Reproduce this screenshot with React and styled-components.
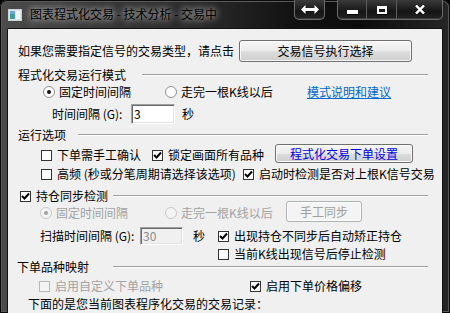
import styled, { createGlobalStyle } from 'styled-components';

const GlobalStyle = createGlobalStyle`
  html, body {
    margin: 0;
    padding: 0;
    background: #000;
  }
  body {
    font-family: "Noto Sans CJK SC", "Noto Sans", sans-serif;
    font-size: 12px;
  }
`;

const CheckMark = () => (
  <svg width="9" height="9" viewBox="0 0 9 9">
    <path d="M1 4 L3.5 6.5 L8 1.5" stroke="#000" strokeWidth="2" fill="none" />
  </svg>
);

const RadioDot = ({ checked, disabled }) => (
  <svg width="12" height="12" viewBox="0 0 12 12">
    <circle cx="6" cy="6" r="5.5" fill={disabled ? '#f4f4f4' : '#fff'} stroke={disabled ? '#c8c8c8' : '#8e8f8f'} />
    {checked && <circle cx="6" cy="6" r="2" fill={disabled ? '#a0a0a0' : '#111'} />}
  </svg>
);

const Check = ({ checked, disabled, children }) => (
  <Item>
    <Box $disabled={disabled}>{checked && <CheckMark />}</Box>
    <Label $disabled={disabled}>{children}</Label>
  </Item>
);

const Radio = ({ checked, disabled, children }) => (
  <Item $gap={4}>
    <RadioDot checked={checked} disabled={disabled} />
    <Label $disabled={disabled}>{children}</Label>
  </Item>
);

const App = () => (
  <>
    <GlobalStyle />
    <Window>
      <TitleBar>
        <AppIcon>
          <svg width="14" height="12" viewBox="0 0 14 12">
            <rect x="0.5" y="0.5" width="13" height="11" fill="#dfe6e8" stroke="#c9d2d6" />
            <rect x="2" y="2" width="5" height="8" fill="#3f9c9a" />
            <rect x="2" y="2" width="5" height="3" fill="#6aa7d8" />
            <rect x="8" y="2" width="4" height="8" fill="#f4f7f8" />
          </svg>
        </AppIcon>
        <Title>图表程式化交易 - 技术分析 - 交易中</Title>
        <Spacer />
        <CaptionGroup $mr={12}>
          <CaptionBtn $w={29}>
            <svg width="18" height="9" viewBox="0 0 18 9">
              <path d="M0 4.5 L4.5 0 L4.5 3 L13.5 3 L13.5 0 L18 4.5 L13.5 9 L13.5 6 L4.5 6 L4.5 9 Z" fill="#fff" />
            </svg>
          </CaptionBtn>
        </CaptionGroup>
        <CaptionGroup $mr={7}>
          <CaptionBtn $w={28}>
            <MinBar />
          </CaptionBtn>
          <CaptionBtn $w={29} $sep>
            <MaxBox />
          </CaptionBtn>
          <CaptionBtn $w={45} $sep>
            <svg width="10" height="9" viewBox="0 0 10 9">
              <path d="M1 0.5 L9 8.5 M9 0.5 L1 8.5" stroke="#fff" strokeWidth="2.4" />
            </svg>
          </CaptionBtn>
        </CaptionGroup>
      </TitleBar>

      <Panel>
        <Row $h={22} $mt={0} $pl={10}>
          <Slot $w={221}>
            <Label>如果您需要指定信号的交易类型，请点击</Label>
          </Slot>
          <Button $w={173} $h={22}>交易信号执行选择</Button>
        </Row>

        <Row $h={14} $mt={6} $pl={10}>
          <GroupLabel $w={124}>程式化交易运行模式</GroupLabel>
          <Etched />
        </Row>

        <Row $h={14} $mt={3} $pl={35}>
          <Slot $w={122}>
            <Radio checked>固定时间间隔</Radio>
          </Slot>
          <Slot $w={142}>
            <Radio>走完一根K线以后</Radio>
          </Slot>
          <Link>模式说明和建议</Link>
        </Row>

        <Row $h={20} $mt={5} $pl={44}>
          <Slot $w={79}>
            <Label>时间间隔 (G):</Label>
          </Slot>
          <Input $w={44} $h={20}>3</Input>
          <Label $ml={7}>秒</Label>
        </Row>

        <Row $h={14} $mt={4} $pl={10}>
          <GroupLabel $w={60}>运行选项</GroupLabel>
          <Etched />
        </Row>

        <Row $h={19} $mt={2} $pl={33} $align="flex-end">
          <Slot $w={111} $h={16}>
            <Check>下单需手工确认</Check>
          </Slot>
          <Slot $w={123} $h={16}>
            <Check checked>锁定画面所有品种</Check>
          </Slot>
          <Button $w={138} $h={19} $blue>程式化交易下单设置</Button>
        </Row>

        <Row $h={14} $mt={4} $pl={33}>
          <Slot $w={202}>
            <Check>高频 (秒或分笔周期请选择该选项)</Check>
          </Slot>
          <Check checked>启动时检测是否对上根K信号交易</Check>
        </Row>

        <Row $h={10} $mt={10} $pl={12}>
          <Slot $w={93}>
            <Check checked>持仓同步检测</Check>
          </Slot>
          <Etched />
        </Row>

        <Row $h={21} $mt={0} $pl={32}>
          <Slot $w={125} $pt={3}>
            <Radio checked disabled>固定时间间隔</Radio>
          </Slot>
          <Slot $w={121} $pt={3}>
            <Radio disabled>走完一根K线以后</Radio>
          </Slot>
          <Button $w={76} $h={21} disabled>手工同步</Button>
        </Row>

        <Row $h={18} $mt={5} $pl={32}>
          <Slot $w={100}>
            <Label>扫描时间间隔 (G):</Label>
          </Slot>
          <Input $w={43} $h={18} $disabled>30</Input>
          <Slot $w={25} $ml={10}>
            <Label>秒</Label>
          </Slot>
          <Check checked>出现持仓不同步后自动矫正持仓</Check>
        </Row>

        <Row $h={14} $mt={2} $pl={210}>
          <Check>当前K线出现信号后停止检测</Check>
        </Row>

        <Row $h={10} $mt={1} $pl={9}>
          <GroupLabel $w={96}>下单品种映射</GroupLabel>
          <Etched />
        </Row>

        <Row $h={14} $mt={7} $pl={31}>
          <Slot $w={211}>
            <Check disabled>启用自定义下单品种</Check>
          </Slot>
          <Check checked>启用下单价格偏移</Check>
        </Row>

        <Row $h={14} $mt={4} $pl={20}>
          <Label>下面的是您当前图表程序化交易的交易记录：</Label>
        </Row>
      </Panel>
    </Window>
  </>
);

export default App;

const Window = styled.div`
  width: 450px;
  height: 313px;
  overflow: hidden;
  display: flex;
  flex-direction: column;
  border-radius: 7px 7px 0 0;
  background: linear-gradient(
    to right,
    #4c4c4c 0%,
    #3a3a3a 20%,
    #2a2a2a 45%,
    #121212 65%,
    #0c0c0c 80%,
    #262626 100%
  );
  box-shadow: inset 0 0 0 1px #0a0a0a, inset 0 0 0 2px #5a5a5a;
`;

const TitleBar = styled.div`
  height: 28px;
  flex-shrink: 0;
  display: flex;
  align-items: flex-start;
`;

const AppIcon = styled.div`
  margin: 9px 0 0 8px;
  display: flex;
`;

const Title = styled.div`
  margin: 6px 0 0 8px;
  line-height: 16px;
  color: #000;
  white-space: nowrap;
  text-shadow: 0 0 6px rgba(230, 230, 230, 0.9), 0 0 10px rgba(200, 200, 200, 0.6);
`;

const Spacer = styled.div`
  flex: 1;
`;

const CaptionGroup = styled.div`
  display: flex;
  height: 19px;
  margin-right: ${(p) => p.$mr}px;
  border: 1px solid #6c6c6c;
  border-top: none;
  border-radius: 0 0 5px 5px;
  background: linear-gradient(#3a3a3a, #161616 60%, #222);
  box-shadow: inset 0 -1px 0 rgba(255, 255, 255, 0.12);
`;

const CaptionBtn = styled.div`
  width: ${(p) => p.$w}px;
  display: flex;
  align-items: center;
  justify-content: center;
  border-left: ${(p) => (p.$sep ? '1px solid #5c5c5c' : 'none')};
`;

const MinBar = styled.div`
  width: 11px;
  height: 4px;
  margin-top: 4px;
  background: #fff;
  box-shadow: 0 1px 0 #000;
`;

const MaxBox = styled.div`
  width: 6px;
  height: 3px;
  border: 2px solid #fff;
  border-top-width: 3px;
  box-shadow: 0 1px 0 #000;
`;

const Panel = styled.div`
  flex: 1;
  margin: 0 7px;
  padding-top: 11px;
  background: #f0f0f0;
  border: 1px solid #111;
  border-bottom: none;
  border-radius: 2px 2px 0 0;
`;

const Row = styled.div`
  display: flex;
  align-items: ${(p) => p.$align || 'center'};
  height: ${(p) => p.$h}px;
  margin-top: ${(p) => p.$mt}px;
  padding-left: ${(p) => p.$pl}px;
  padding-right: 14px;
  white-space: nowrap;
`;

const Slot = styled.div`
  width: ${(p) => p.$w}px;
  height: ${(p) => (p.$h ? `${p.$h}px` : 'auto')};
  margin-left: ${(p) => p.$ml || 0}px;
  padding-top: ${(p) => p.$pt || 0}px;
  flex-shrink: 0;
  display: flex;
  align-items: center;
`;

const Item = styled.div`
  display: flex;
  align-items: center;
  gap: ${(p) => p.$gap || 5}px;
`;

const Box = styled.span`
  width: 9px;
  height: 9px;
  flex-shrink: 0;
  display: flex;
  align-items: center;
  justify-content: center;
  border: 1px solid ${(p) => (p.$disabled ? '#b8b8b8' : '#333')};
  background: ${(p) => (p.$disabled ? '#f4f4f4' : '#fff')};
`;

const Label = styled.span`
  line-height: 16px;
  margin-left: ${(p) => p.$ml || 0}px;
  color: ${(p) => (p.$disabled ? '#a3a3a3' : '#000')};
`;

const GroupLabel = styled.span`
  width: ${(p) => p.$w}px;
  flex-shrink: 0;
  line-height: 16px;
  color: #000;
`;

const Etched = styled.div`
  flex: 1;
  height: 0;
  border-top: 1px solid #a0a0a0;
  border-bottom: 1px solid #fff;
`;

const Link = styled.span`
  line-height: 16px;
  color: #0066cc;
  text-decoration: underline;
`;

const Button = styled.button`
  width: ${(p) => p.$w}px;
  height: ${(p) => p.$h}px;
  flex-shrink: 0;
  padding: 0;
  font: inherit;
  font-size: 12px;
  line-height: 14px;
  color: ${(p) => (p.disabled ? '#a0a0a0' : p.$blue ? '#0000e0' : '#000')};
  border: 1px solid ${(p) => (p.disabled ? '#adb2b5' : '#707070')};
  border-radius: 3px;
  background: ${(p) =>
    p.disabled
      ? '#f4f4f4'
      : 'linear-gradient(#f6f6f6 0%, #ebebeb 50%, #dddddd 51%, #cfcfcf 100%)'};
  box-shadow: inset 0 0 0 1px rgba(255, 255, 255, 0.8);
`;

const Input = styled.div`
  width: ${(p) => p.$w}px;
  height: ${(p) => p.$h}px;
  box-sizing: border-box;
  flex-shrink: 0;
  padding: 0 0 0 2px;
  line-height: ${(p) => p.$h - 2}px;
  color: ${(p) => (p.$disabled ? '#8a8a8a' : '#000')};
  background: ${(p) => (p.$disabled ? '#f0f0f0' : '#fff')};
  border-top: 1px solid #a0a0a0;
  border-left: 1px solid #a0a0a0;
  border-right: 1px solid #fff;
  border-bottom: 1px solid #fff;
  box-shadow: inset 1px 1px 0 #696969, inset -1px -1px 0 #e3e3e3;
`;
